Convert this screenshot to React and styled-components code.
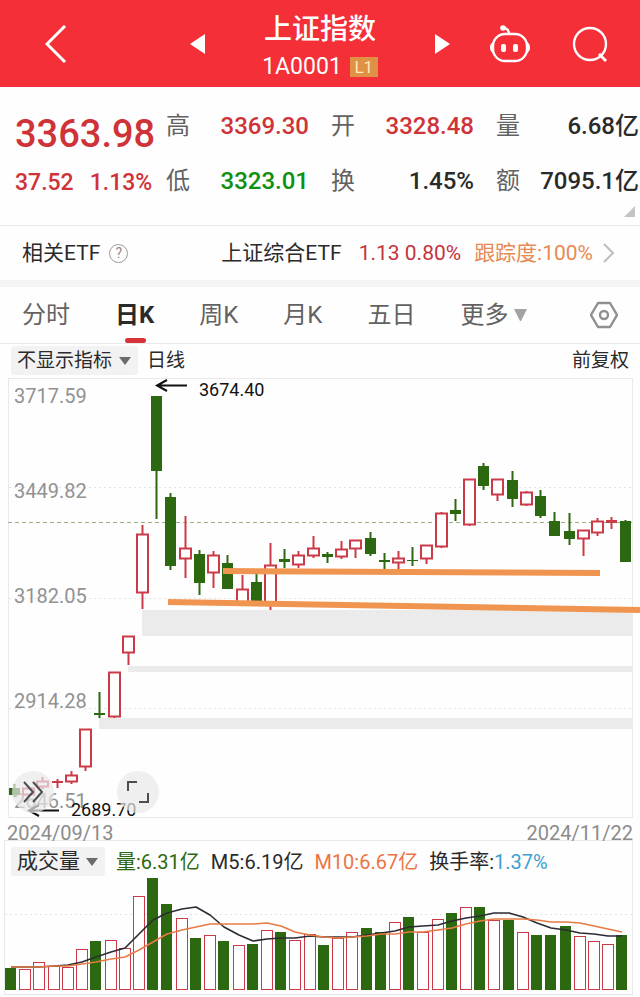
import React, { useState } from "react";
import styled, { createGlobalStyle } from "styled-components";

const COLORS = {
  header: "#f42f38",
  up: "#cf3338",
  candleUp: "#cb3a48",
  down: "#0f9010",
  candleDown: "#2c6810",
  orange: "#f09550",
  text: "#2a2a2a",
  muted: "#626262",
  axis: "#929292",
  line: "#e9e9e9",
};

const STATS = [
  { label: "高", value: "3369.30", color: COLORS.up },
  { label: "开", value: "3328.48", color: COLORS.up },
  { label: "量", value: "6.68亿" },
  { label: "低", value: "3323.01", color: COLORS.down },
  { label: "换", value: "1.45%" },
  { label: "额", value: "7095.1亿" },
];

const TABS = ["分时", "日K", "周K", "月K", "五日"];

// body top, body bottom, high, low, kind (u = hollow red, d = green, f = filled red)
const CANDLES = [
  [788, 795, 784, 797, "d"],
  [788, 795, 786, 797, "u"],
  [781, 787, 777, 789, "u"],
  [781, 783, 779, 788, "f"],
  [775, 782, 771, 784, "u"],
  [729, 767, 729, 771, "u"],
  [713, 715, 692, 718, "d"],
  [672, 717, 672, 718, "u"],
  [636, 653, 636, 665, "u"],
  [534, 593, 525, 609, "u"],
  [396, 471, 396, 519, "d"],
  [497, 566, 493, 570, "d"],
  [548, 559, 516, 578, "u"],
  [554, 583, 550, 595, "d"],
  [555, 573, 551, 588, "u"],
  [563, 589, 555, 589, "d"],
  [589, 604, 575, 604, "u"],
  [582, 602, 574, 602, "d"],
  [565, 604, 543, 610, "u"],
  [559, 562, 549, 568, "d"],
  [555, 565, 551, 568, "u"],
  [548, 556, 536, 558, "u"],
  [554, 557, 552, 563, "d"],
  [549, 557, 541, 559, "u"],
  [540, 549, 540, 558, "u"],
  [538, 554, 532, 556, "d"],
  [560, 562, 553, 569, "d"],
  [558, 563, 551, 569, "u"],
  [560, 561, 547, 566, "d"],
  [545, 559, 545, 564, "u"],
  [513, 547, 512, 548, "u"],
  [510, 514, 499, 521, "d"],
  [479, 525, 479, 526, "u"],
  [466, 486, 463, 490, "d"],
  [479, 495, 479, 501, "u"],
  [480, 499, 471, 507, "d"],
  [492, 505, 491, 506, "u"],
  [496, 516, 490, 518, "d"],
  [521, 536, 512, 536, "d"],
  [531, 539, 513, 545, "d"],
  [530, 539, 530, 556, "u"],
  [521, 533, 518, 536, "u"],
  [520, 523, 517, 529, "f"],
  [521, 562, 520, 562, "d"],
];

const VOLUMES = [
  968, 969, 962, 966, 967, 949, 941, 940, 948, 896, 878, 904, 918, 938, 935,
  941, 945, 944, 930, 932, 940, 934, 945, 938, 932, 928, 932, 922, 917, 932,
  919, 913, 907, 907, 920, 920, 932, 935, 935, 926, 936, 941, 944, 935,
];
const VOLUME_DOWN = [
  0, 6, 10, 11, 13, 15, 17, 19, 22, 25, 26, 28, 31, 33, 35, 37, 38, 39, 43,
];

const MA5 = [
  967, 967, 967, 966, 965, 962, 957, 952, 948, 934, 920, 913, 909, 907, 915,
  927, 935, 941, 939, 938, 938, 936, 937, 937, 937, 935, 933, 931, 927, 926,
  925, 921, 918, 916, 913, 913, 917, 923, 928, 930, 933, 934, 936, 936,
];
const MA10 = [
  967, 967, 967, 966, 966, 964, 962, 959, 957, 950, 942, 934, 930, 927, 924,
  924, 924, 924, 923, 926, 932, 935, 937, 938, 937, 936, 934, 934, 932, 932,
  930, 928, 924, 921, 919, 919, 919, 920, 922, 922, 923, 926, 929, 932,
];

const STEP = 14.22;
const BASELINE = 989;

const toPoints = (values) =>
  values.map((y, i) => `${Math.round(11 + i * STEP)},${y}`).join(" ");

const Candle = ({ index, data }) => {
  const [top, bottom, high, low, kind] = data;
  const x = Math.round(14 + index * STEP);
  const color = kind === "d" ? COLORS.candleDown : COLORS.candleUp;
  return (
    <g stroke={color} strokeWidth="2">
      <path d={`M${x + 0.5} ${high}V${top}M${x + 0.5} ${bottom}V${low}`} />
      {kind === "u" ? (
        <rect
          x={x - 5}
          y={top + 0.5}
          width="11"
          height={bottom - top - 1}
          fill="#fff"
        />
      ) : (
        <rect
          x={x - 5}
          y={top}
          width="11"
          height={bottom - top}
          fill={color}
          stroke="none"
        />
      )}
    </g>
  );
};

const PriceChart = () => (
  <Svg viewBox="0 377 640 441" role="img" aria-label="日K线">
    <path d="M8 378.5H632.5V817.5H8.5V378" fill="none" stroke={COLORS.line} />
    <g stroke="#e4e4e4" strokeDasharray="2 3">
      <path d="M9 487.5H632M9 598.5H632M9 708.5H632" />
    </g>
    <g fill="#ebebeb">
      <rect x="142" y="610" width="491" height="26" />
      <rect x="128" y="666" width="505" height="6" />
      <rect x="99" y="718" width="534" height="11" />
    </g>
    <path d="M8 522.5H632" stroke="#9caf80" strokeDasharray="4 3" />
    <g fill={COLORS.axis} fontSize="20">
      <text x="14" y="403">3717.59</text>
      <text x="14" y="498">3449.82</text>
      <text x="14" y="603">3182.05</text>
      <text x="14" y="708">2914.28</text>
      <text x="14" y="808">2646.51</text>
    </g>
    {CANDLES.map((data, i) => (
      <Candle key={i} index={i} data={data} />
    ))}
    <g stroke={COLORS.orange} strokeWidth="6">
      <path d="M223 571L600 573" />
      <path d="M168 602L640 610" />
    </g>
    <g fill="none" stroke="#111" strokeWidth="2">
      <path d="M187 385.5H157M167 380L157 385.5L167 391" />
      <path d="M59 810.5H29M39 805L29 810.5L39 816" />
    </g>
    <g fill="#111" fontSize="18">
      <text x="199" y="396">3674.40</text>
      <text x="71" y="816">2689.70</text>
    </g>
  </Svg>
);

const VolumeChart = () => (
  <Svg viewBox="5 877 627 117" role="img" aria-label="成交量">
    <path d="M5 914.5H632" stroke="#e4e4e4" strokeDasharray="2 3" />
    {VOLUMES.map((top, i) => {
      const x = Math.round(5 + i * STEP);
      return VOLUME_DOWN.includes(i) ? (
        <rect
          key={i}
          x={x}
          y={top}
          width="11"
          height={BASELINE + 1 - top}
          fill={COLORS.candleDown}
        />
      ) : (
        <rect
          key={i}
          x={x + 0.5}
          y={top + 0.5}
          width="11"
          height={BASELINE - top}
          fill="#fff"
          stroke={COLORS.candleUp}
        />
      );
    })}
    <g fill="none" strokeWidth="1.6" strokeLinejoin="round">
      <polyline points={toPoints(MA5)} stroke="#2b2b33" />
      <polyline points={toPoints(MA10)} stroke="#e87b45" />
    </g>
  </Svg>
);

const Dropdown = ({ label, value, size }) => (
  <SelectBox>
    <Select aria-label={label} defaultValue={value} $size={size}>
      <option>{value}</option>
    </Select>
    <svg width="12" height="8" viewBox="0 0 12 8">
      <path d="M0 0H12L6 8Z" fill="#6b6b6b" />
    </svg>
  </SelectBox>
);

const App = () => {
  const [active, setActive] = useState("日K");

  return (
    <Page>
      <GlobalStyle />
      <Header>
        <HeaderSide>
          <IconButton aria-label="返回">
            <svg width="22" height="38" viewBox="0 0 22 38">
              <path
                d="M20 1L2 19L20 37"
                fill="none"
                stroke="#fff"
                strokeWidth="3"
              />
            </svg>
          </IconButton>
        </HeaderSide>
        <Switcher>
          <IconButton aria-label="上一个">
            <svg width="15" height="20" viewBox="0 0 15 20">
              <path d="M15 0V20L0 10Z" fill="#fff" />
            </svg>
          </IconButton>
          <TitleBlock>
            <Title>上证指数</Title>
            <Code>
              1A0001 <Level>L1</Level>
            </Code>
          </TitleBlock>
          <IconButton aria-label="下一个">
            <svg width="15" height="20" viewBox="0 0 15 20">
              <path d="M0 0V20L15 10Z" fill="#fff" />
            </svg>
          </IconButton>
        </Switcher>
        <HeaderSide $end>
          <IconButton aria-label="智能助手">
            <svg width="42" height="38" viewBox="0 0 42 38" fill="none">
              <path
                d="M20 9C20 5 18 3 14 3"
                stroke="#fff"
                strokeWidth="2.4"
              />
              <circle cx="14" cy="3" r="2.8" fill="#fff" />
              <rect
                x="4"
                y="9"
                width="34"
                height="27"
                rx="12"
                stroke="#fff"
                strokeWidth="2.4"
              />
              <path
                d="M4 17C0 19 0 26 4 28ZM38 17C42 19 42 26 38 28Z"
                fill="#fff"
              />
              <rect x="12" y="19" width="5" height="8" rx="2" fill="#fff" />
              <rect x="24" y="19" width="5" height="8" rx="2" fill="#fff" />
            </svg>
          </IconButton>
          <IconButton aria-label="搜索">
            <svg width="36" height="36" viewBox="0 0 36 36" fill="none">
              <circle cx="18" cy="18" r="16" stroke="#fff" strokeWidth="2.4" />
              <path d="M27 28L34 35" stroke="#fff" strokeWidth="2.8" />
            </svg>
          </IconButton>
        </HeaderSide>
      </Header>

      <Quote>
        <Current>
          <Price>3363.98</Price>
          <Change>
            <span>37.52</span>
            <span>1.13%</span>
          </Change>
        </Current>
        <Stats>
          {STATS.map(({ label, value, color }) => (
            <Stat key={label}>
              <dt>{label}</dt>
              <StatValue $color={color}>{value}</StatValue>
            </Stat>
          ))}
        </Stats>
        <Corner width="11" height="11" viewBox="0 0 11 11">
          <path d="M11 0V11H0Z" fill="#c4c4c4" />
        </Corner>
      </Quote>

      <EtfRow>
        <EtfTitle>
          相关ETF
          <Help aria-label="说明">?</Help>
        </EtfTitle>
        <EtfLink href="#etf">
          上证综合ETF
          <EtfChange>1.13 0.80%</EtfChange>
          <Tracking>跟踪度:100%</Tracking>
          <svg width="12" height="20" viewBox="0 0 12 20">
            <path
              d="M1 1L10 10L1 19"
              fill="none"
              stroke="#bdbdbd"
              strokeWidth="2"
            />
          </svg>
        </EtfLink>
      </EtfRow>

      <Tabs>
        {TABS.map((tab) => (
          <Tab key={tab} $active={tab === active} onClick={() => setActive(tab)}>
            {tab}
          </Tab>
        ))}
        <Tab>
          更多
          <svg width="13" height="12" viewBox="0 0 13 12">
            <path d="M0 0H13L7 12H6Z" fill="#a3a3a3" />
          </svg>
        </Tab>
        <Settings aria-label="设置">
          <svg width="28" height="28" viewBox="0 0 28 28" fill="none">
            <g stroke="#8f8f8f" strokeWidth="2.4">
              <path
                d="M8 2H20L27 14L20 26H8L1 14Z"
                strokeLinejoin="round"
              />
              <circle cx="14" cy="14" r="4" />
            </g>
          </svg>
        </Settings>
      </Tabs>

      <Toolbar>
        <Dropdown label="指标" value="不显示指标" size={19} />
        <span>日线</span>
        <Adjust>前复权</Adjust>
      </Toolbar>

      <ChartArea>
        <PriceChart />
        <ChartActions>
          <RoundButton aria-label="展开">
            <svg width="20" height="22" viewBox="0 0 20 22">
              <path
                d="M1 1L10 11L1 21M10 1L19 11L10 21"
                fill="none"
                stroke="#4d4d4d"
                strokeWidth="2"
              />
            </svg>
          </RoundButton>
          <RoundButton aria-label="全屏">
            <svg width="22" height="22" viewBox="0 0 22 22">
              <path
                d="M1 10V1H10M21 12V21H12"
                fill="none"
                stroke="#4d4d4d"
                strokeWidth="2"
              />
            </svg>
          </RoundButton>
        </ChartActions>
      </ChartArea>
      <Dates>
        <time>2024/09/13</time>
        <time>2024/11/22</time>
      </Dates>

      <VolumePanel>
        <Legend>
          <Dropdown label="副图指标" value="成交量" size={21} />
          <LegendItem $color={COLORS.candleDown}>量:6.31亿</LegendItem>
          <LegendItem>M5:6.19亿</LegendItem>
          <LegendItem $color="#ec7444">M10:6.67亿</LegendItem>
          <LegendItem>
            换手率:<Turnover>1.37%</Turnover>
          </LegendItem>
        </Legend>
        <VolumeChart />
      </VolumePanel>
    </Page>
  );
};

const GlobalStyle = createGlobalStyle`
  * {
    box-sizing: border-box;
  }

  body {
    margin: 0;
    background: #fefefe;
  }

  button, select {
    margin: 0;
    border: 0;
    padding: 0;
    background: none;
    color: inherit;
    font: inherit;
  }

  svg {
    display: block;
    flex-shrink: 0;
  }
`;

const Page = styled.main`
  color: ${COLORS.text};
  font-family: Roboto, "Noto Sans CJK SC", sans-serif;
  white-space: nowrap;
  overflow: hidden;
`;

const Svg = styled.svg`
  width: 100%;
  height: auto;
`;

const Header = styled.header`
  display: grid;
  grid-template-columns: minmax(0, 1fr) auto minmax(0, 1fr);
  height: 87px;
  background: ${COLORS.header};
  color: #fff;
`;

const HeaderSide = styled.div`
  display: flex;
  align-items: center;
  justify-content: ${(props) => (props.$end ? "flex-end" : "flex-start")};
  gap: 41px;
  padding: ${(props) => (props.$end ? "0 32px 0 0" : "0 0 0 45px")};
`;

const IconButton = styled.button`
  display: flex;
  cursor: pointer;
`;

const Switcher = styled.div`
  display: flex;
  align-items: center;
  gap: 57px;
`;

const TitleBlock = styled.div`
  display: flex;
  flex-direction: column;
  align-items: center;
  width: 116px;
  padding-top: 7px;
`;

const Title = styled.h1`
  margin: 0;
  font-size: 28px;
  line-height: 40px;
  font-weight: 500;
`;

const Code = styled.div`
  display: flex;
  align-items: center;
  gap: 8px;
  font-size: 23px;
  line-height: 34px;
`;

const Level = styled.span`
  width: 28px;
  background: #df9146;
  color: #ffe9b8;
  font-size: 17px;
  line-height: 20px;
  text-align: center;
`;

const Quote = styled.section`
  position: relative;
  display: grid;
  grid-template-columns: 151px 1fr;
  padding: 12px 1px 16px 15px;
  border-bottom: 1px solid ${COLORS.line};
`;

const Current = styled.div`
  color: ${COLORS.up};
`;

const Price = styled.div`
  font-size: 38px;
  line-height: 70px;
  font-weight: 500;
`;

const Change = styled.div`
  display: flex;
  gap: 16px;
  font-size: 23px;
  line-height: 28px;
  font-weight: 500;
`;

const Stats = styled.dl`
  display: grid;
  grid-template-columns: repeat(3, 1fr);
  column-gap: 22px;
  margin: 0;
`;

const Stat = styled.div`
  display: flex;
  justify-content: space-between;
  font-size: 24px;
  line-height: 55px;

  dt {
    color: ${COLORS.muted};
  }
`;

const StatValue = styled.dd`
  margin: 0;
  color: ${(props) => props.$color || COLORS.text};
  font-weight: 500;
`;

const Corner = styled.svg`
  position: absolute;
  right: 5px;
  bottom: 8px;
`;

const EtfRow = styled.section`
  display: flex;
  align-items: center;
  justify-content: space-between;
  height: 61px;
  padding: 0 25px 0 22px;
  border-bottom: 7px solid #f4f4f4;
  font-size: 21px;
  line-height: 30px;
`;

const EtfTitle = styled.div`
  display: flex;
  align-items: center;
  gap: 9px;
`;

const Help = styled.button`
  width: 19px;
  height: 19px;
  border: 1px solid #9d9d9d;
  border-radius: 50%;
  color: #8f8f8f;
  font-size: 14px;
  line-height: 17px;
`;

const EtfLink = styled.a`
  display: flex;
  align-items: center;
  color: inherit;
  text-decoration: none;
`;

const EtfChange = styled.span`
  margin: 0 13px 0 17px;
  color: #c5333d;
`;

const Tracking = styled.span`
  margin-right: 10px;
  color: #e78a53;
`;

const Tabs = styled.nav`
  display: flex;
  gap: 45px;
  height: 57px;
  padding: 0 22px;
  border-bottom: 1px solid ${COLORS.line};
`;

const Tab = styled.button`
  position: relative;
  display: flex;
  align-items: center;
  gap: 6px;
  color: ${(props) => (props.$active ? COLORS.text : COLORS.muted)};
  font-size: 24px;
  line-height: 30px;
  font-weight: ${(props) => (props.$active ? 700 : 400)};
  cursor: pointer;

  &::after {
    content: "";
    display: ${(props) => (props.$active ? "block" : "none")};
    position: absolute;
    bottom: 0;
    left: 50%;
    width: 21px;
    height: 5px;
    margin-left: -10px;
    border-radius: 3px;
    background: #d5323a;
  }
`;

const Settings = styled(IconButton)`
  align-items: center;
  margin-left: auto;
`;

const Toolbar = styled.div`
  display: flex;
  align-items: center;
  gap: 9px;
  height: 33px;
  padding: 0 11px;
  font-size: 19px;
  line-height: 28px;
`;

const SelectBox = styled.div`
  position: relative;

  svg {
    position: absolute;
    top: 11px;
    right: 7px;
    pointer-events: none;
  }
`;

const Select = styled.select`
  appearance: none;
  display: block;
  height: 29px;
  padding: 0 25px 0 6px;
  border-radius: 3px;
  background: #f2f2f2;
  font-size: ${(props) => props.$size}px;
  line-height: 29px;
`;

const Adjust = styled.button`
  margin-left: auto;
`;

const ChartArea = styled.section`
  position: relative;
`;

const ChartActions = styled.div`
  position: absolute;
  left: 12px;
  bottom: 5px;
  display: flex;
  gap: 63px;
`;

const RoundButton = styled.button`
  display: flex;
  align-items: center;
  justify-content: center;
  width: 42px;
  height: 42px;
  border-radius: 50%;
  background: rgba(232, 232, 232, 0.7);
`;

const Dates = styled.div`
  display: flex;
  justify-content: space-between;
  height: 22px;
  padding: 0 7px;
  color: #8c8c8c;
  font-size: 20px;
  line-height: 30px;
`;

const VolumePanel = styled.section`
  margin: 0 7px 0 4px;
  border: 1px solid ${COLORS.line};
`;

const Legend = styled.div`
  display: flex;
  align-items: center;
  gap: 11px;
  height: 36px;
  padding: 5px 6px 0;
`;

const LegendItem = styled.span`
  color: ${(props) => props.$color || COLORS.text};
  font-size: 20px;
  line-height: 28px;
`;

const Turnover = styled.span`
  color: #3f9fd0;
`;

export default App;
